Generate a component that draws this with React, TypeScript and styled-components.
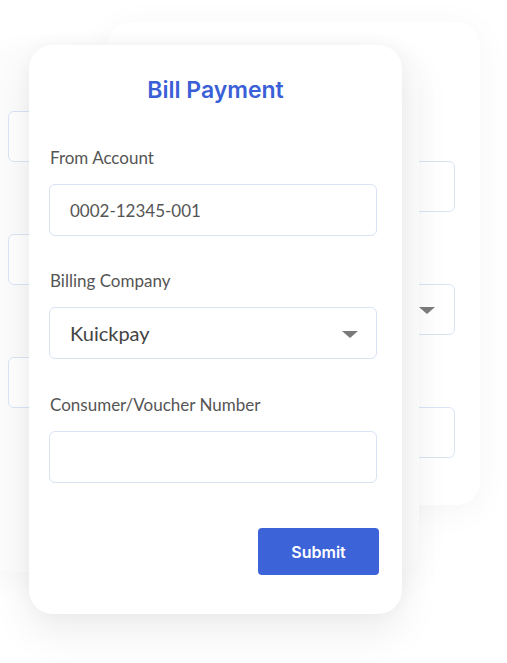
import React from "react";
import styled, { createGlobalStyle } from "styled-components";

const Global = createGlobalStyle`
  html, body { margin: 0; padding: 0; background: #ffffff; }
  * { box-sizing: border-box; }
`;

const Stage = styled.div`
  position: relative;
  width: 507px;
  height: 663px;
  overflow: hidden;
  background: #ffffff;
`;

const BackCard = styled.div<{ $x: number; $y: number; $w: number; $h: number; $tint: string; $pad: string }>`
  position: absolute;
  left: ${(p) => p.$x}px;
  top: ${(p) => p.$y}px;
  width: ${(p) => p.$w}px;
  height: ${(p) => p.$h}px;
  border-radius: 24px;
  background: ${(p) => p.$tint};
  box-shadow: 0 6px 36px rgba(0, 0, 0, 0.045);
  display: flex;
  flex-direction: column;
  padding: ${(p) => p.$pad};
  gap: 72px;
`;

const GhostField = styled.div`
  position: relative;
  height: 51px;
  border: 1px solid #d9e5f5;
  border-radius: 6px;
  background: #ffffff;
`;

const GhostArrow = styled.span`
  position: absolute;
  right: 19px;
  top: 22px;
  width: 0;
  height: 0;
  border-left: 8px solid transparent;
  border-right: 8px solid transparent;
  border-top: 7px solid #7c7c7c;
`;

const Card = styled.div`
  position: absolute;
  left: 29px;
  top: 45px;
  width: 373px;
  height: 569px;
  border-radius: 24px;
  background: #ffffff;
  box-shadow: 0 18px 40px rgba(0, 0, 0, 0.075), 0 0 18px rgba(0, 0, 0, 0.03);
  display: flex;
  flex-direction: column;
  padding: 32px 23px 0 21px;
`;

const Title = styled.h1`
  margin: 0;
  text-align: center;
  font-family: Inter, "Liberation Sans", sans-serif;
  font-weight: 600;
  font-size: 23px;
  line-height: 26px;
  color: #3b5fd7;
  padding-left: 2px;
`;

const Form = styled.div`
  display: flex;
  flex-direction: column;
  margin-top: 45px;
`;

const Group = styled.div`
  display: flex;
  flex-direction: column;
  gap: 16px;
  margin-bottom: 35px;

  &:nth-child(2) {
    margin-bottom: 36px;
  }
`;

const Label = styled.label`
  font-family: Lato, "Open Sans", sans-serif;
  font-size: 17px;
  line-height: 20px;
  color: #555555;
`;

const Field = styled.div<{ $big?: boolean }>`
  position: relative;
  height: 52px;
  width: 328px;
  margin-left: -1px;
  border: 1px solid #d8e3f3;
  border-radius: 6px;
  display: flex;
  align-items: center;
  padding: 0 20px;
  font-family: Lato, "Open Sans", sans-serif;
  font-size: ${(p) => (p.$big ? "20px" : "17px")};
  color: ${(p) => (p.$big ? "#444444" : "#555555")};
`;

const Arrow = styled.span`
  position: absolute;
  right: 18px;
  top: 23px;
  width: 0;
  height: 0;
  border-left: 8px solid transparent;
  border-right: 8px solid transparent;
  border-top: 7px solid #7a7a7a;
`;

const Actions = styled.div`
  display: flex;
  justify-content: flex-end;
  margin-top: 10px;
`;

const Submit = styled.button`
  width: 121px;
  height: 47px;
  border: none;
  border-radius: 4px;
  background: #3d63d9;
  color: #ffffff;
  font-family: Inter, "Liberation Sans", sans-serif;
  font-weight: 600;
  font-size: 16px;
  cursor: pointer;
`;

export default function App() {
  return (
    <>
      <Global />
      <Stage>
        <BackCard $x={107} $y={22} $w={373} $h={483} $tint="#ffffff" $pad="139px 25px 0 20px">
          <GhostField />
          <GhostField>
            <GhostArrow />
          </GhostField>
          <GhostField />
        </BackCard>
        <BackCard $x={-12} $y={52} $w={431} $h={520} $tint="#fcfcfc" $pad="59px 20px 0 20px">
          <GhostField />
          <GhostField />
          <GhostField />
        </BackCard>
        <Card>
          <Title>Bill Payment</Title>
          <Form>
            <Group>
              <Label>From Account</Label>
              <Field>0002-12345-001</Field>
            </Group>
            <Group>
              <Label>Billing Company</Label>
              <Field $big>
                Kuickpay
                <Arrow />
              </Field>
            </Group>
            <Group>
              <Label>Consumer/Voucher Number</Label>
              <Field />
            </Group>
          </Form>
          <Actions>
            <Submit>Submit</Submit>
          </Actions>
        </Card>
      </Stage>
    </>
  );
}
